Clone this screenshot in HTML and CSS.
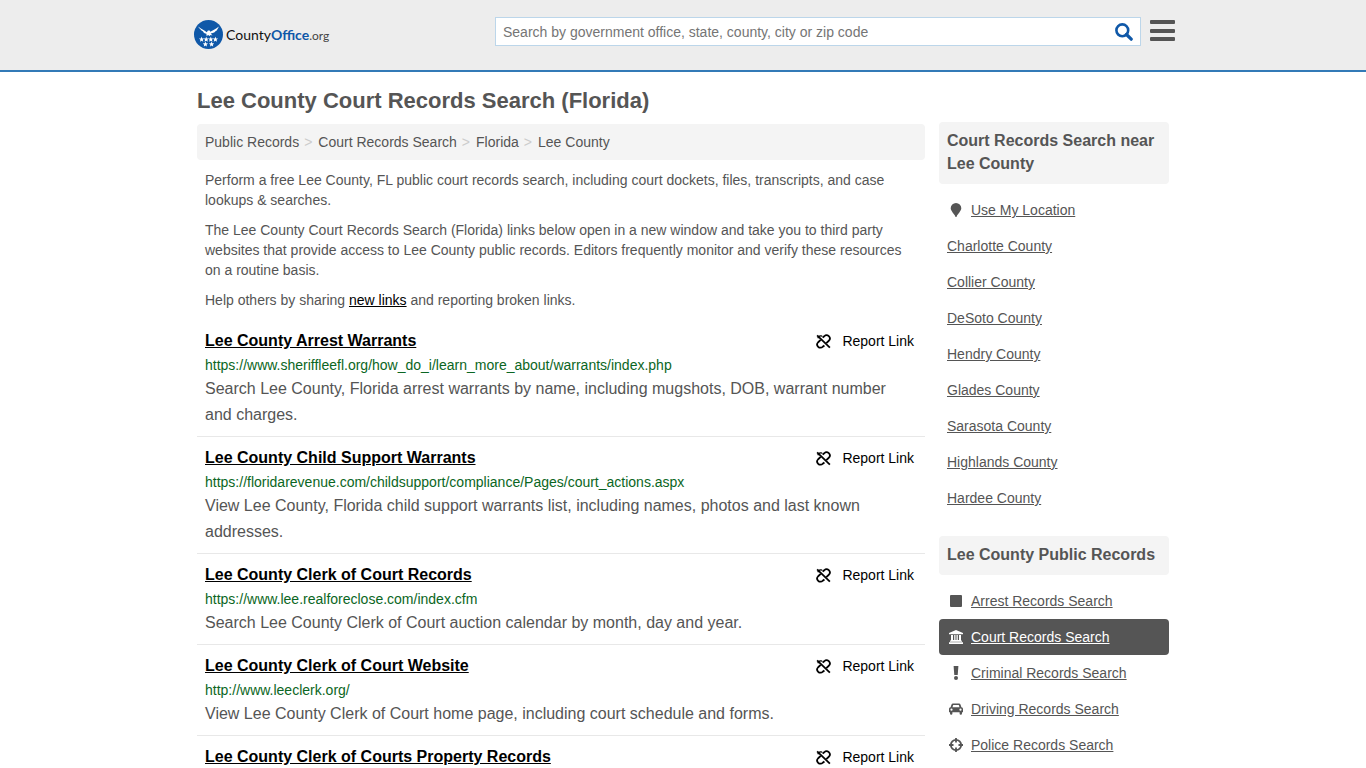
FILE: index.html
```html
<!DOCTYPE html>
<html lang="en">
<head>
<meta charset="utf-8">
<meta name="viewport" content="width=device-width, initial-scale=1">
<title>Lee County Court Records Search (Florida)</title>
<link rel="stylesheet" href="styles.css">
</head>
<body>
<svg class="defs" aria-hidden="true">
  <symbol id="unlink" viewBox="0 0 16 16">
    <g fill="none" stroke="currentColor" stroke-width="1.900">
      <path d="M1.200 1.500 14.800 14.500"/>
      <path d="M7 3.800 8.800 2.400a3.400 3.400 0 0 1 4.900 4.800L11 9.800"/>
      <path d="M9 12.200 7.200 13.600a3.400 3.400 0 0 1-4.900-4.800L5 6.200"/>
      <path d="M2 4.500C2.500 2.500 4.500 1.500 6.500 2.300" stroke-width="1.400"/>
    </g>
  </symbol>
  <symbol id="star" viewBox="0 0 10 10"><path d="M5 0 6.300 3.500 10 3.700 7.100 6 8.100 9.700 5 7.600 1.900 9.700 2.900 6 0 3.700 3.700 3.500z"/></symbol>
</svg>

<header class="site-header">
  <div class="header-inner">
    <a class="logo" href="#">
      <svg class="logo-mark" viewBox="0 0 29 29" aria-hidden="true">
        <circle cx="14.500" cy="14.500" r="14.500" fill="#0f58a8"/>
        <g fill="#fff">
          <path d="M4.300 6.500C6.500 9 9.500 9.600 12.800 12.200l1.100-1.700 1.800-.1.600 1.400C19.500 9.600 22.500 9 24.700 6.500c-.3 1.400-.8 2.300-1.800 3.100h.7c-.7 1-1.600 1.600-2.700 2h.6c-.8.8-1.800 1.300-2.900 1.500l-1.900.4 1.800 2-2-.5-.9.900-1.400-1-1.600 1-.2-2.200c-1.300-.2-2.400-.6-3.500-2h.7C8.500 11.300 7.400 10.700 6.300 9.600l.8-.1C5.700 8.700 4.800 7.800 4.300 6.500z"/>
          <use href="#star" x="4.900" y="16.600" width="5.400" height="5.400"/>
          <use href="#star" x="9.500" y="16.600" width="5.400" height="5.400"/>
          <use href="#star" x="14.100" y="16.600" width="5.400" height="5.400"/>
          <use href="#star" x="18.700" y="16.600" width="5.400" height="5.400"/>
          <use href="#star" x="8.700" y="21.400" width="5.400" height="5.400"/>
          <use href="#star" x="14.900" y="21.400" width="5.400" height="5.400"/>
        </g>
      </svg>
      <span class="logo-text">County<b>Office</b><span class="logo-tld">.org</span></span>
    </a>
    <form class="search" role="search">
      <input class="search-input" type="search" aria-label="Search" placeholder="Search by government office, state, county, city or zip code">
      <button class="search-button" type="button" aria-label="Search">
        <svg viewBox="0 0 18 18" width="18" height="18" fill="none" stroke="#0f58a8"><circle cx="7.300" cy="7.300" r="5.900" stroke-width="2.600"/><path d="M11.500 11.500 16.200 16.200" stroke-width="3.200" stroke-linecap="round"/></svg>
      </button>
    </form>
    <button class="menu-button" type="button" aria-label="Menu">
      <svg viewBox="0 0 25 22" width="25" height="22" fill="#555"><rect y="0" width="25" height="4" rx="1"/><rect y="9" width="25" height="4" rx="1"/><rect y="17" width="25" height="4" rx="1"/></svg>
    </button>
  </div>
</header>

<div class="page">
  <main class="main">
    <h1 class="title">Lee County Court Records Search (Florida)</h1>
    <nav class="crumbs" aria-label="Breadcrumb">
      <a href="#">Public Records</a><span class="sep">&gt;</span><a href="#">Court Records Search</a><span class="sep">&gt;</span><a href="#">Florida</a><span class="sep">&gt;</span><a href="#">Lee County</a>
    </nav>
    <div class="intro">
      <p>Perform a free Lee County, FL public court records search, including court dockets, files, transcripts, and case lookups &amp; searches.</p>
      <p>The Lee County Court Records Search (Florida) links below open in a new window and take you to third party websites that provide access to Lee County public records. Editors frequently monitor and verify these resources on a routine basis.</p>
      <p>Help others by sharing <a href="#">new links</a> and reporting broken links.</p>
    </div>
    <section class="results">
      <article class="result">
        <div class="result-head"><a class="result-title" href="#">Lee County Arrest Warrants</a><a class="report" href="#"><svg class="report-icon"><use href="#unlink"/></svg>Report Link</a></div>
        <div class="url">https://www.sheriffleefl.org/how_do_i/learn_more_about/warrants/index.php</div>
        <p class="desc">Search Lee County, Florida arrest warrants by name, including mugshots, DOB, warrant number and charges.</p>
      </article>
      <article class="result">
        <div class="result-head"><a class="result-title" href="#">Lee County Child Support Warrants</a><a class="report" href="#"><svg class="report-icon"><use href="#unlink"/></svg>Report Link</a></div>
        <div class="url">https://floridarevenue.com/childsupport/compliance/Pages/court_actions.aspx</div>
        <p class="desc">View Lee County, Florida child support warrants list, including names, photos and last known addresses.</p>
      </article>
      <article class="result">
        <div class="result-head"><a class="result-title" href="#">Lee County Clerk of Court Records</a><a class="report" href="#"><svg class="report-icon"><use href="#unlink"/></svg>Report Link</a></div>
        <div class="url">https://www.lee.realforeclose.com/index.cfm</div>
        <p class="desc">Search Lee County Clerk of Court auction calendar by month, day and year.</p>
      </article>
      <article class="result">
        <div class="result-head"><a class="result-title" href="#">Lee County Clerk of Court Website</a><a class="report" href="#"><svg class="report-icon"><use href="#unlink"/></svg>Report Link</a></div>
        <div class="url">http://www.leeclerk.org/</div>
        <p class="desc">View Lee County Clerk of Court home page, including court schedule and forms.</p>
      </article>
      <article class="result">
        <div class="result-head"><a class="result-title" href="#">Lee County Clerk of Courts Property Records</a><a class="report" href="#"><svg class="report-icon"><use href="#unlink"/></svg>Report Link</a></div>
      </article>
    </section>
  </main>

  <aside class="side">
    <section>
      <h2 class="side-title">Court Records Search near Lee County</h2>
      <ul class="side-list">
        <li><svg class="icon" viewBox="0 0 14 14"><path d="M7 0a5.300 5.300 0 0 1 5.300 5.300c0 2.800-3.600 5.500-4.600 8.100-.3.800-1.100.8-1.400 0C5.300 10.800 1.700 8.100 1.700 5.300A5.300 5.300 0 0 1 7 0z"/></svg><a href="#">Use My Location</a></li>
        <li><a href="#">Charlotte County</a></li>
        <li><a href="#">Collier County</a></li>
        <li><a href="#">DeSoto County</a></li>
        <li><a href="#">Hendry County</a></li>
        <li><a href="#">Glades County</a></li>
        <li><a href="#">Sarasota County</a></li>
        <li><a href="#">Highlands County</a></li>
        <li><a href="#">Hardee County</a></li>
      </ul>
    </section>
    <section>
      <h2 class="side-title">Lee County Public Records</h2>
      <ul class="side-list">
        <li><svg class="icon" viewBox="0 0 14 14"><rect x="1" y="1" width="12" height="12" rx="1"/></svg><a href="#">Arrest Records Search</a></li>
        <li class="active"><svg class="icon" viewBox="0 0 14 14"><path d="M7 0 14 3v1.200H0V3zM2 5h2v5h1.200V5h1.300v5h1V5h1.300v5H10V5h2v5.200l1 .8v.700H1V11l1-1zM0 12.200h14V14H0z"/></svg><a href="#">Court Records Search</a></li>
        <li><svg class="icon" viewBox="0 0 14 14"><path d="M4.600 0h4.800L8.700 9H5.300z"/><circle cx="7" cy="12" r="2"/></svg><a href="#">Criminal Records Search</a></li>
        <li><svg class="icon" viewBox="0 0 14 14"><path fill-rule="evenodd" d="M4 1.500h6c.8 0 1.300.4 1.600 1.200l.8 2.500C13.400 5.400 14 6 14 7v3.200h-1V11.500a1.200 1.200 0 0 1-2.400 0v-1.300H3.400v1.300a1.200 1.200 0 0 1-2.400 0v-1.300H0V7c0-1 .6-1.600 1.600-1.800l.8-2.500C2.700 1.900 3.200 1.500 4 1.500zM4.200 3l-.7 2.200h7L9.800 3zM2.500 6.600a1.100 1.100 0 1 0 0 2.200 1.100 1.100 0 0 0 0-2.200zM11.500 6.600a1.100 1.100 0 1 0 0 2.200 1.100 1.100 0 0 0 0-2.200z"/></svg><a href="#">Driving Records Search</a></li>
        <li><svg class="icon" viewBox="0 0 14 14"><g fill="none" stroke="currentColor" stroke-width="1.800"><circle cx="7" cy="7" r="5.200"/><path d="M7 0v4.500M7 9.500v4.500M0 7h4.500M9.500 7h4.500"/></g></svg><a href="#">Police Records Search</a></li>
      </ul>
    </section>
  </aside>
</div>
</body>
</html>
```
FILE: styles.css
```css
* { box-sizing: border-box; }

body {
  margin: 0;
  background: #fff;
  color: #555;
  font-family: "Liberation Sans", Arial, sans-serif;
  font-size: 14px;
  line-height: 20px;
}

h1, h2, p, ul { margin: 0; padding: 0; }
ul { list-style: none; }
button { padding: 0; border: 0; background: none; cursor: pointer; }

.defs { display: none; }

.site-header {
  background: #ededed;
  border-bottom: 2px solid #337ab7;
}

.header-inner {
  display: flex;
  align-items: flex-start;
  gap: 9px;
  max-width: 984px;
  margin: 0 auto;
  padding: 17px 0 21px 3px;
}

.logo {
  display: flex;
  align-items: center;
  gap: 3px;
  flex: 0 0 292px;
  height: 29px;
  margin-top: 3px;
  color: #111;
  text-decoration: none;
}

.logo-mark { width: 29px; height: 29px; flex: none; }
.logo-text { padding-top: 2px; font-family: Lato, sans-serif; font-size: 14px; }
.logo-text b { color: #0f58a8; }
.logo-tld { color: #444; font-size: 12px; }

.search {
  display: flex;
  flex: 1;
  height: 29px;
  background: #fff;
  border: 1px solid #bcd6ea;
}

.search-input {
  flex: 1;
  min-width: 0;
  border: 0;
  padding: 0 7px;
  background: transparent;
  color: #555;
  font: inherit;
  outline: 0;
}

.search-input::placeholder { color: #757575; }
.search-button { display: flex; align-items: center; padding: 1px 7px 0; }
.menu-button { display: flex; padding-top: 3px; }

.page {
  display: flex;
  gap: 14px;
  max-width: 972px;
  margin: 0 auto;
}

.main { flex: 1; min-width: 0; }

.title {
  padding: 17px 0 11px;
  font-size: 22px;
  line-height: 24px;
}

.crumbs {
  padding: 8px;
  background: #f4f4f4;
  border-radius: 4px;
}

.crumbs a { color: #555; text-decoration: none; }
.sep { padding: 0 6px 0 5px; color: #ccc; }

.intro { padding: 10px 8px 0; }
.intro p { margin-bottom: 10px; }
.intro a { color: #000; }

.result { padding: 9px 8px 8px; border-bottom: 1px solid #e8e8e8; }
.result:last-child { border-bottom: 0; }

.result-head {
  display: flex;
  justify-content: space-between;
  align-items: center;
  margin-bottom: 1px;
  padding-right: 3px;
  line-height: 24px;
}

.result-title { color: #000; font-size: 16px; font-weight: bold; }

.report {
  display: flex;
  align-items: center;
  gap: 11px;
  color: #000;
  text-decoration: none;
}

.report-icon { width: 15px; height: 15px; }
.url { color: #0b6623; line-height: 22px; }
.desc { font-size: 16px; line-height: 26px; }

.side { flex: 0 0 230px; padding-top: 50px; }

.side-title {
  margin-bottom: 8px;
  padding: 7px 8px 9px;
  background: #f4f4f4;
  border-radius: 4px;
  font-size: 16px;
  line-height: 23px;
}

.side-list { margin-bottom: 20px; }

.side-list li {
  display: flex;
  align-items: center;
  gap: 8px;
  padding: 8px;
  border-radius: 4px;
}

.side-list a { color: inherit; }
.icon { width: 14px; height: 14px; margin-left: 2px; fill: currentColor; }
.side-list .active { background: #555; color: #fff; }
```
